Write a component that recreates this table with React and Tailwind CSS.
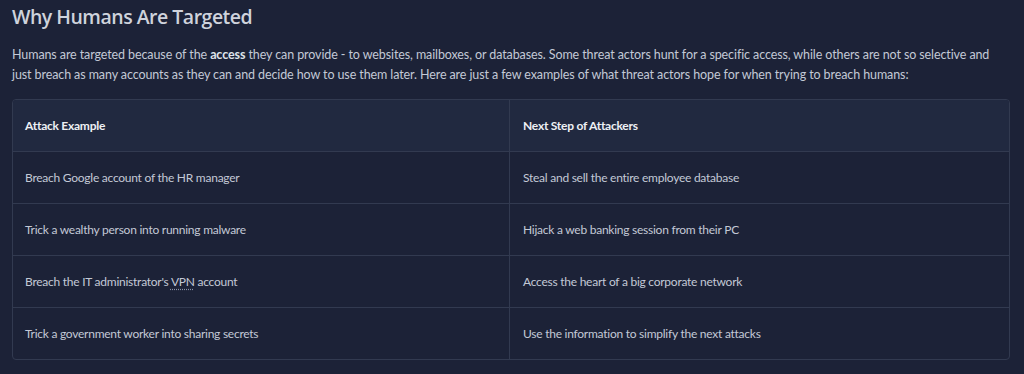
export default function App() {
  const rows = [
    ["Breach Google account of the HR manager", "Steal and sell the entire employee database"],
    ["Trick a wealthy person into running malware", "Hijack a web banking session from their PC"],
    [
      <>Breach the IT administrator's <span className="underline decoration-dotted decoration-[#8a93a8] underline-offset-[3px]">VPN</span> account</>,
      "Access the heart of a big corporate network",
    ],
    ["Trick a government worker into sharing secrets", "Use the information to simplify the next attacks"],
  ];
  return (
    <div className="w-[1024px] h-[374px] bg-[#1c2237] text-[#c3c9d6] overflow-hidden" style={{ fontFamily: "Lato, 'Noto Sans', sans-serif" }}>
      <div className="pl-3 pr-[14px] pt-[4px]">
        <h2 className="text-[19.5px] leading-[26px] font-semibold tracking-[-0.5px] text-[#cfd3dc]" style={{ fontFamily: "'Open Sans', 'Noto Sans', sans-serif" }}>Why Humans Are Targeted</h2>
        <p className="mt-[15px] text-[12.5px] tracking-[-0.1px] leading-[20px] text-[#c3c9d6]">
          Humans are targeted because of the <b className="font-bold text-[#dfe3ea]">access</b> they can provide - to websites, mailboxes, or databases. Some threat actors hunt for a specific access, while others are not so selective and just breach as many accounts as they can and decide how to use them later. Here are just a few examples of what threat actors hope for when trying to breach humans:
        </p>
        <div className="mt-[14px] w-[998px] border border-[#323a50] rounded-[4px] overflow-hidden text-[12px] tracking-[-0.25px]">
          <div className="grid grid-cols-[497px_1fr] bg-[#212940] h-[51px] items-center font-bold text-[#eef0f4]">
            <div className="pl-3 h-full flex items-center border-r border-[#323a50]"><span>Attack Example</span></div>
            <div className="pl-[13px]">Next Step of Attackers</div>
          </div>
          {rows.map((r, i) => (
            <div key={i} className="grid grid-cols-[497px_1fr] h-[52px] border-t border-[#323a50] items-center">
              <div className="pl-3 h-full flex items-center border-r border-[#323a50]"><span>{r[0]}</span></div>
              <div className="pl-[13px]">{r[1]}</div>
            </div>
          ))}
        </div>
      </div>
    </div>
  );
}
